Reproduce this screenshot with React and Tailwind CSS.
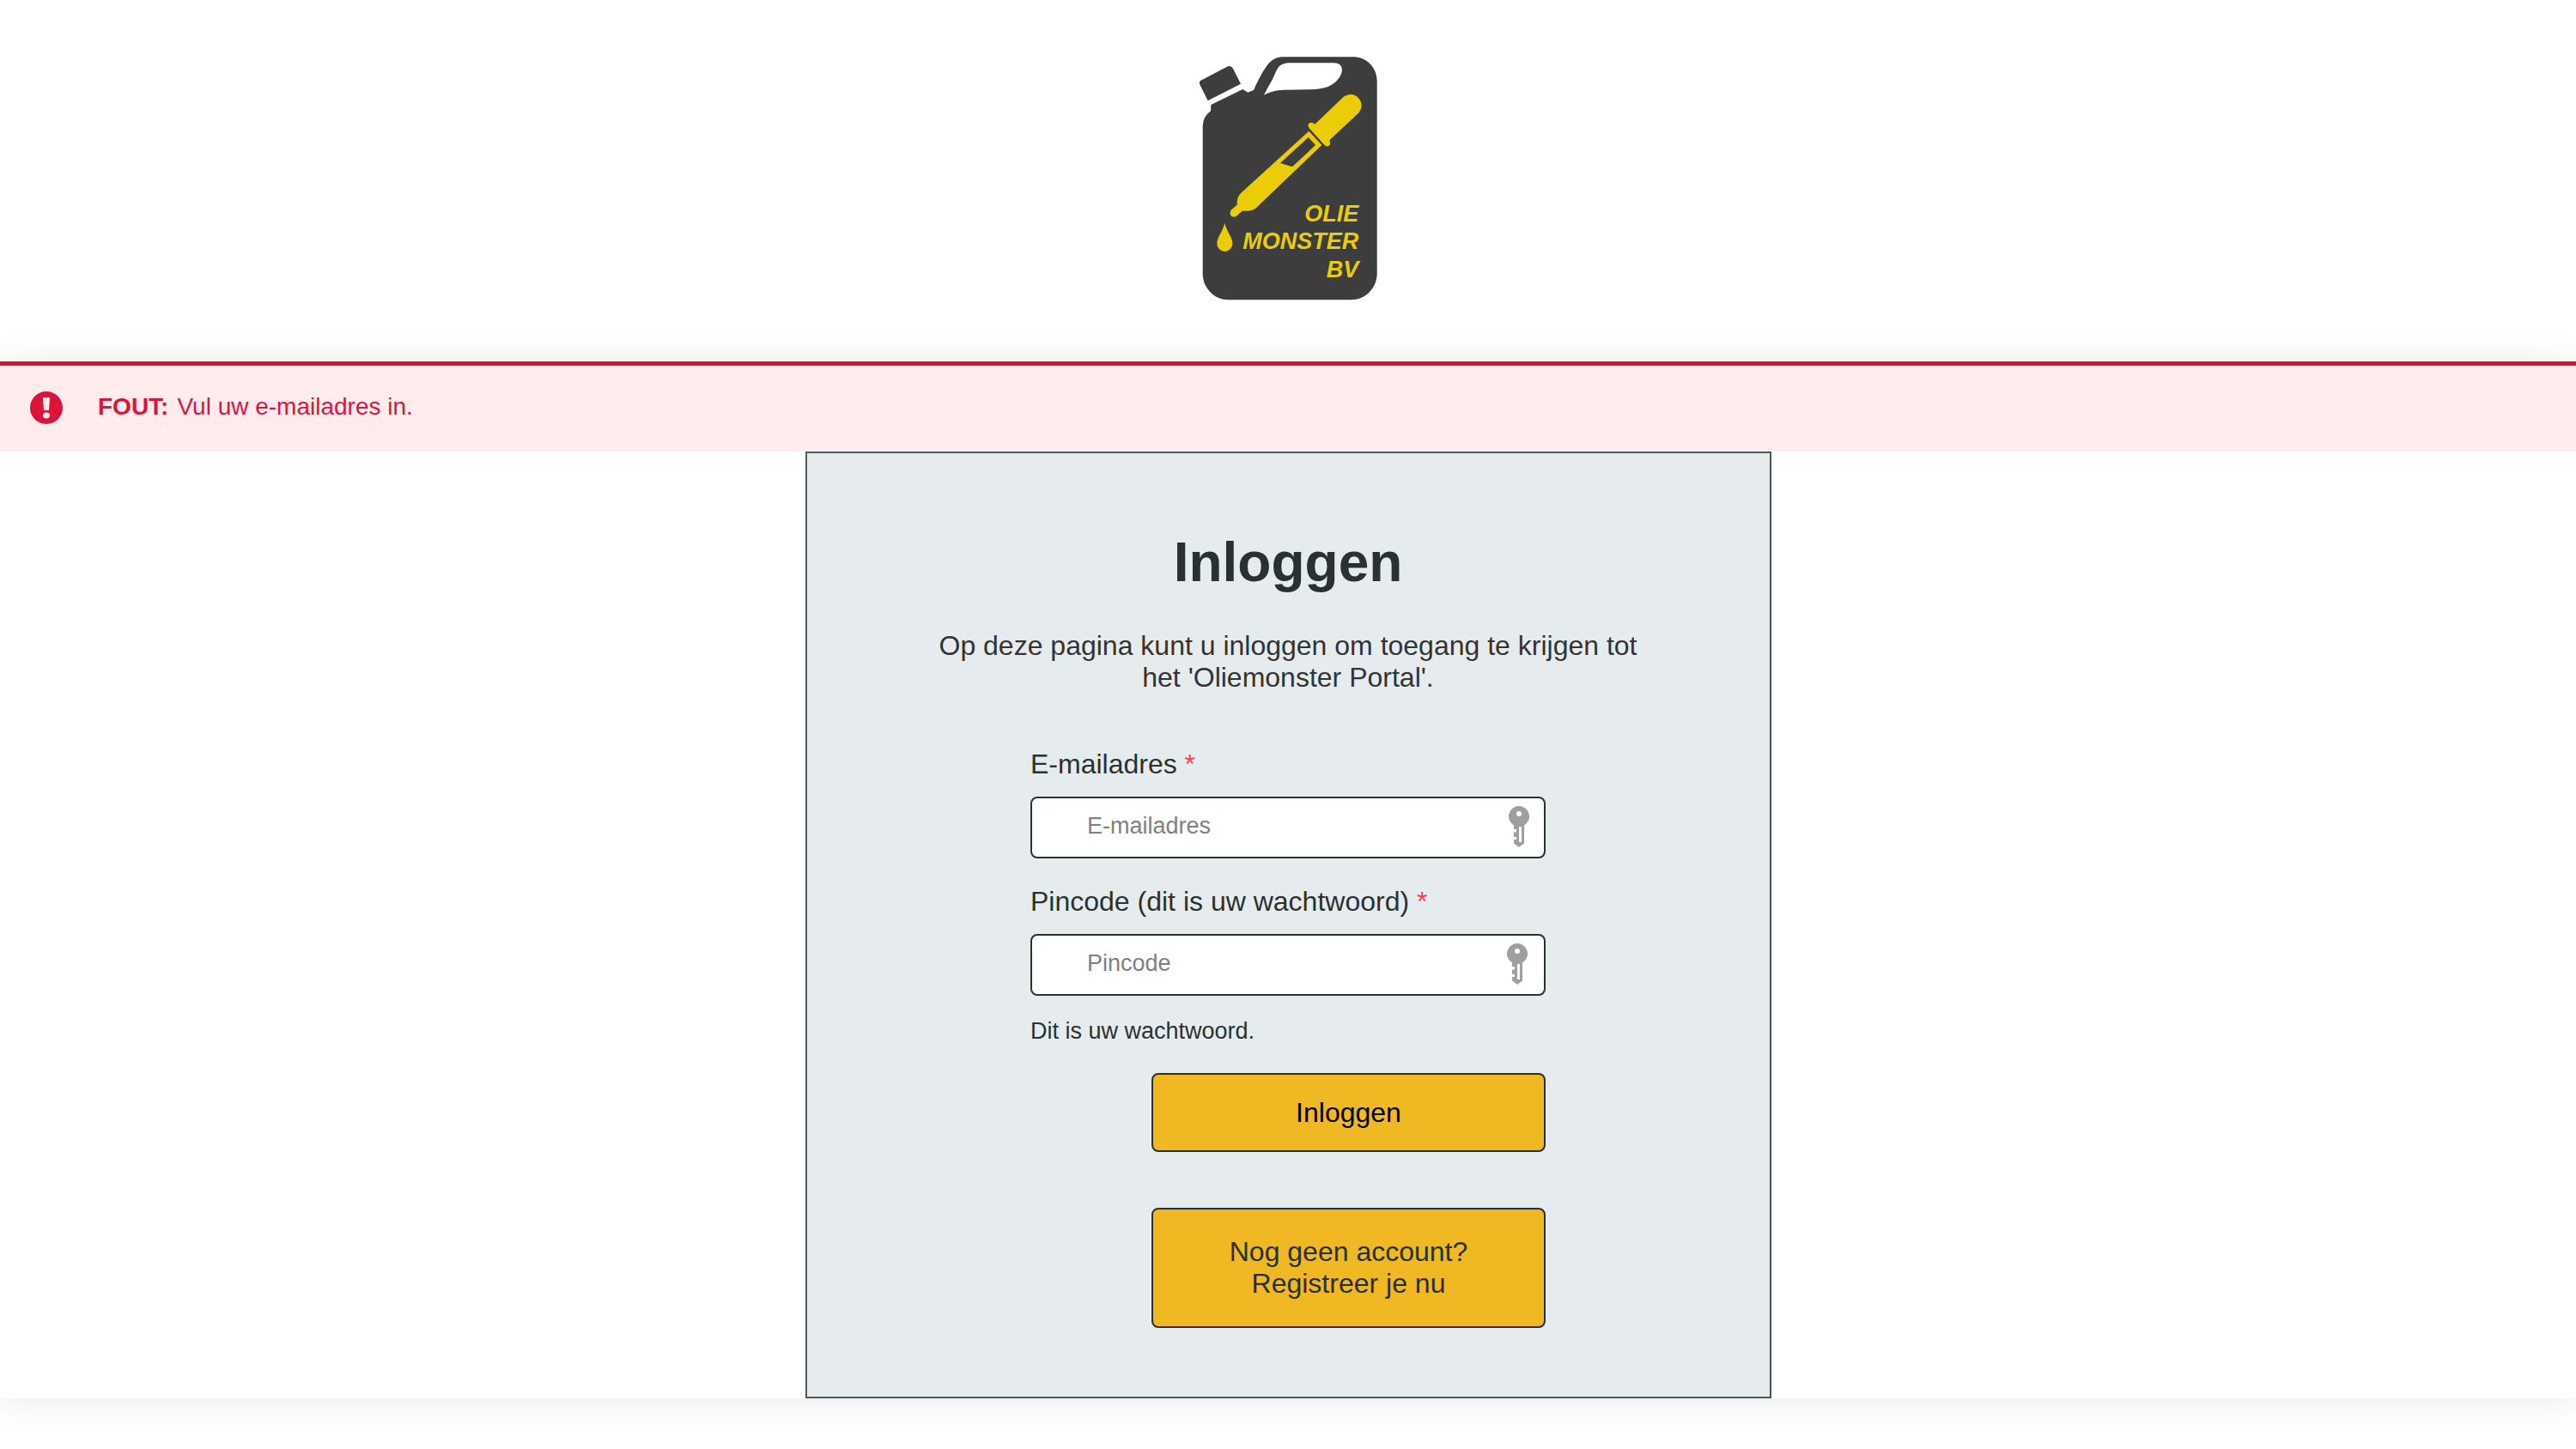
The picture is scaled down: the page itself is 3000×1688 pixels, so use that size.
function Logo() {
  return (
    <svg viewBox="0 0 780 990" className="h-[330px] w-[260px]" role="img" aria-label="Olie Monster BV">
      <g fill="#3d3d3d">
        <path d="M84 162 Q78 168 83 178 L110 232 L225 173 L198 120 Q192 108 180 112 Z" />
        <path
          fillRule="evenodd"
          d="M121 246 L232 192 L250 203 L270 195 C290 150 310 115 325 99 Q345 79 370 79 L622 79 C665 81 700 115 701 162 L701 838 C700 888 660 928 610 928 L183 928 C133 928 93 888 92 838 L92 320 Q93 288 120 268 Z M306 212 Q335 195 375 194 L470 193 Q520 192 545 175 Q577 152 579 125 Q578 100 550 100 L388 100 Q360 103 350 125 C340 150 328 172 318 188 Z"
        />
      </g>
      <g fill="#ebcd07">
        <path d="M484 314 L581 221 C600 205 625 207 638 225 C652 242 648 262 636 275 L535 370 Q541 388 531 391 Q521 393 514 383 L464 328 Q457 318 463 311 Q474 305 484 314 Z" />
        <path
          fillRule="evenodd"
          d="M463 338 L508 387 L285 601 Q270 617 250 617 L231 617 L209 636 Q198 641 190 633 Q185 625 191 614 L212 596 L212 588 Q212 568 226 554 Z M461 360 L363 450 L405 463 L486 387 Z"
        />
        <path d="M169 660 C176 690 196 708 196 732 A27 27 0 0 1 142 732 C142 708 162 690 169 660 Z" />
        <g fontFamily="'Liberation Sans', Arial, sans-serif" fontSize="81" fontWeight="700" fontStyle="italic" textAnchor="end">
          <text x="637" y="653">OLIE</text>
          <text x="637" y="751">MONSTER</text>
          <text x="637" y="849">BV</text>
        </g>
      </g>
    </svg>
  );
}

function AlertIcon() {
  return (
    <svg viewBox="0 0 38 38" className="size-[38px] shrink-0" aria-hidden="true">
      <circle cx="19" cy="19" r="19" fill="#dc143c" />
      <path d="M15 7 H23 L22 22 H16 Z" fill="#ffecec" />
      <ellipse cx="19" cy="28" rx="4" ry="3.4" fill="#ffecec" />
    </svg>
  );
}

function KeyIcon() {
  return (
    <svg viewBox="0 0 24 48" className="h-12 w-6" aria-hidden="true">
      <path
        fill="#9f9f9f"
        fillRule="evenodd"
        d="M12 0 A12 12 0 0 1 18 22.4 V43.5 L12 48 L6 43.5 V39 H9 V36 H6 V30.5 H9 V27 H6 V22.4 A12 12 0 0 1 12 0 Z M12 6 A3 3 0 1 0 12 12 A3 3 0 1 0 12 6 Z M12 24 V42 H15 V24 Z"
      />
    </svg>
  );
}

function Field({ id, type, label, placeholder, keyClass }) {
  return (
    <div className="flex flex-col gap-[19px]">
      <label htmlFor={id} className="text-[32px] leading-[37px]">
        {label} <span className="text-[#ff3b4b]">*</span>
      </label>
      <div className="relative">
        <input
          id={id}
          type={type}
          required
          placeholder={placeholder}
          className="block h-[72px] w-full rounded-lg border-2 border-[#2a3132] bg-white pr-16 pb-1 pl-16 text-[27px] placeholder:text-[#808080]"
        />
        <span className={`pointer-events-none absolute top-[11px] ${keyClass}`}>
          <KeyIcon />
        </span>
      </div>
    </div>
  );
}

export default function App() {
  return (
    <div className="min-h-screen bg-white font-['Liberation_Sans',Arial,sans-serif] text-[#2a3132]">
      <header className="flex justify-center pt-10 pb-[51px]">
        <Logo />
      </header>

      <main className="bg-white shadow-[0_2px_42px_rgba(0,0,20,0.09)]">
        <div role="alert" className="flex items-center gap-[41px] border-t-[5px] border-[#dc143c] bg-[#ffecec] pt-[30px] pb-8 pl-[35px] text-[#dc143c]">
          <AlertIcon />
          <p className="flex gap-2.5 pb-0.5 text-[28px] leading-8">
            <strong className="font-bold">FOUT:</strong>
            <span>Vul uw e-mailadres in.</span>
          </p>
        </div>

        <section className="mx-auto flex w-[37.5%] min-w-[700px] flex-col items-center border-2 border-[#50585b] bg-[#e6ecee] pt-[91px] pb-20">
          <h1 className="text-[64px] leading-[72px] font-bold">Inloggen</h1>
          <p className="mt-[43px] max-w-[840px] text-center text-[32px] leading-[37px] text-[#333333]">
            Op deze pagina kunt u inloggen om toegang te krijgen tot het 'Oliemonster Portal'.
          </p>

          <form className="mt-16 flex w-full max-w-[600px] flex-col" noValidate onSubmit={(e) => e.preventDefault()}>
            <div className="flex flex-col gap-8">
              <Field id="email" type="email" label="E-mailadres" placeholder="E-mailadres" keyClass="right-[19px]" />
              <Field id="pin" type="password" label="Pincode (dit is uw wachtwoord)" placeholder="Pincode" keyClass="right-[21px]" />
            </div>
            <p className="mt-[25px] text-[27px] leading-8">Dit is uw wachtwoord.</p>
            <button
              type="submit"
              className="mt-[33px] h-[92px] w-[459px] self-end rounded-lg border-2 border-[#2a3132] bg-[#f0b823] text-[32px] leading-[37px] text-black"
            >
              Inloggen
            </button>
            <a
              href="#registreren"
              className="mt-[65px] flex w-[459px] flex-col self-end rounded-lg border-2 border-[#2a3132] bg-[#f0b823] py-[31px] text-center text-[32px] leading-[37px]"
            >
              <span>Nog geen account?</span>
              <span>Registreer je nu</span>
            </a>
          </form>
        </section>
      </main>
    </div>
  );
}
